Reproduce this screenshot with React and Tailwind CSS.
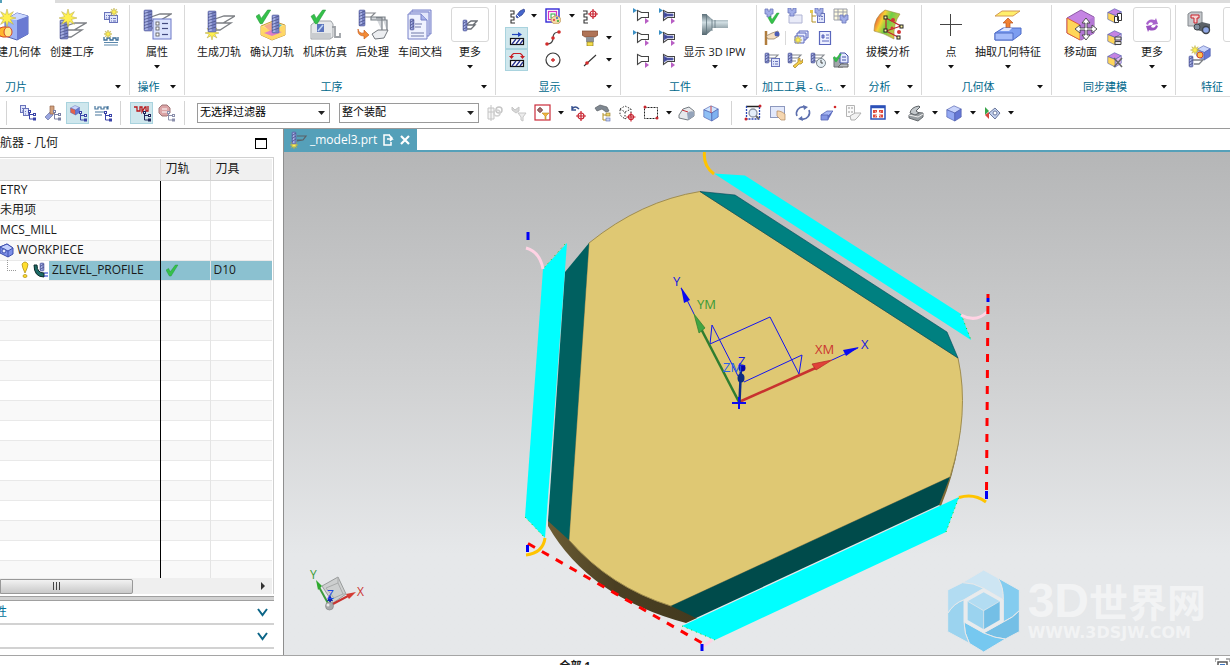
import React, { useState } from 'react';

/* ---------- shared bits ---------- */

const Caret = () => (
    <svg width="6" height="4" viewBox="0 0 6 4" className="shrink-0">
        <path d="M0 0h6L3 3.6z" fill="#111" />
    </svg>
);

const Svg = ({ w = 18, h = 18, children }) => (
    <svg width={w} height={h} viewBox={`0 0 ${w} ${h}`} className="shrink-0" aria-hidden="true">
        {children}
    </svg>
);

// Milling cutter with its flutes
function Bit({ x, y, w, h }) {
    const flutes = [];
    for (let i = 2; i < h - 1; i += 3) flutes.push(i);
    return (
        <g>
            <rect x={x} y={y} width={w} height={h} rx="1" fill="#7a84c6" stroke="#5a639f" strokeWidth=".6" />
            <rect x={x + 1} y={y + 1} width={w / 3} height={h - 2} fill="#a9b2e4" />
            {flutes.map((f) => (
                <path key={f} d={`M${x} ${y + f + 1.5}L${x + w} ${y + f - 1}`} stroke="#4a5288" strokeWidth=".8" />
            ))}
        </g>
    );
}

// Tool path passes behind the cutter
const Passes = ({ x, y }) => (
    <path
        d={`M${x} ${y + 4}L${x + 9} ${y + 1}h11L${x + 8} ${y + 8}h-8M${x + 8} ${y + 8}h8L${x + 5} ${y + 15}h-5`}
        fill="none"
        stroke="#7d8085"
        strokeWidth="1.3"
    />
);

const Star = ({ x, y, r }) => {
    const pts = [];
    for (let i = 0; i < 16; i++) {
        const a = (i * Math.PI) / 8;
        const d = i % 2 ? r * 0.42 : r;
        pts.push(`${x + Math.sin(a) * d},${y - Math.cos(a) * d}`);
    }
    return <polygon points={pts.join(' ')} fill="#fff04f" stroke="#b3a443" strokeWidth=".5" />;
};

const Check = ({ x, y, s = 1 }) => (
    <path
        d="M0 6l3-2 2 4L11 0l3 0L6 13H4z"
        transform={`translate(${x} ${y}) scale(${s})`}
        fill="#35c14a"
        stroke="#1c9433"
        strokeWidth=".5"
    />
);

const Cube = ({ x, y, s, top = '#c9d4fb', left = '#93a8f2', right = '#6577d4' }) => (
    <g transform={`translate(${x} ${y}) scale(${s / 20})`} stroke="#4b5bab" strokeWidth=".8" strokeLinejoin="round">
        <path d="M1 6l9-5 9 4-8 5z" fill={top} />
        <path d="M1 6l10 4v10L1 15z" fill={left} />
        <path d="M11 10l8-5v10l-8 5z" fill={right} />
    </g>
);

const Tree = ({ x, y, color = '#3a43a8' }) => (
    <g fill="none" stroke={color} strokeWidth="1">
        <path d={`M${x + 1.5} ${y + 2}v7h4M${x + 1.5} ${y + 4.5}h4`} />
        <rect x={x + 0.5} y={y + 0.5} width="2" height="2" fill="#fff" />
        <rect x={x + 5.5} y={y + 3.5} width="2" height="2" fill="#fff" />
        <rect x={x + 5.5} y={y + 8} width="2" height="2" fill="#fff" />
    </g>
);

const Sheet = ({ x, y, w, h }) => (
    <g stroke="#6973bb" strokeWidth="1">
        <rect x={x + 0.5} y={y + 0.5} width={w - 1} height={h - 1} fill="#dfe5fb" />
        <path d={`M${x + 2} ${y + 3.5}h1M${x + 4} ${y + 3.5}h${w - 6}M${x + 2} ${y + 6}h1M${x + 4} ${y + 6}h${w - 6}`} />
    </g>
);

/* ---------- large ribbon icons ---------- */

const GeometryIcon = () => (
    <Svg w={30} h={32}>
        <path d="M6 11L18 4l11 3v18l-11 6L6 27z" fill="#9db3f6" stroke="#5566b5" />
        <path d="M18 11l11-4v18l-11 6z" fill="#6a7ad2" />
        <path d="M6 11L18 4l11 3-11 4z" fill="#cbd8ff" />
        <rect x="0" y="18" width="11" height="10" rx="4" fill="#ffb52e" stroke="#d2462b" />
        <ellipse cx="9" cy="23" rx="4" ry="5" fill="#ffe98a" stroke="#d2462b" />
        <Star x={8} y={9} r={9} />
    </Svg>
);

const CreateOpIcon = () => (
    <Svg w={30} h={32}>
        <Passes x={9} y={13} />
        <Bit x={3} y={11} w={8} h={19} />
        <Star x={11} y={9} r={9} />
    </Svg>
);

const PropertyIcon = () => (
    <Svg w={30} h={32}>
        <Passes x={9} y={4} />
        <Bit x={2} y={1} w={8} h={21} />
        <rect x="11" y="10" width="18" height="20" fill="#dbe3fd" stroke="#6a76c6" />
        {[13, 18, 24].map((y) => (
            <g key={y}>
                <rect x="14" y={y} width="3" height="3" fill="#fff" stroke="#555" strokeWidth=".8" />
                <path d={`M20 ${y + 1.5}h6`} stroke="#444c80" strokeWidth="1.2" />
            </g>
        ))}
    </Svg>
);

const GenerateIcon = () => (
    <Svg w={32} h={32}>
        <Passes x={12} y={6} />
        <Star x={9} y={24} r={7} />
        <Bit x={5} y={2} w={8} h={21} />
    </Svg>
);

const VerifyIcon = () => (
    <Svg w={32} h={32}>
        <path d="M5 17l12-5 12 4v10l-13 5-11-5z" fill="#ffe58a" stroke="#c79c40" />
        <path d="M5 17l11 5 13-6v10l-13 5-11-5z" fill="#ffd766" />
        <path d="M8 17l9-4v9l-3 0z" fill="#f7a98a" />
        <path d="M17 13l9 3-6 5h-3z" fill="#54c7d4" />
        <path d="M8 24l8-3 10 2-10 4z" fill="#e07fc6" />
        <Bit x={16} y={6} w={7} h={18} />
        <Check x={0} y={1} s={1.05} />
    </Svg>
);

const MachineIcon = () => (
    <Svg w={32} h={32}>
        <path d="M2 16l5-4h15l2 3v13l-3 2H2z" fill="#e6e8ea" stroke="#a1a5a9" />
        <path d="M2 24h20v5H2z" fill="#c9cccf" />
        <rect x="8" y="15" width="7" height="8" fill="#5b74bd" />
        <path d="M9 22l5-6" stroke="#c0d6f5" strokeWidth="1.5" />
        <path d="M23 18h3v10h5v-4" fill="none" stroke="#9ea2a7" strokeWidth="1.8" />
        <Check x={2} y={1} s={1.05} />
    </Svg>
);

const PostIcon = () => (
    <Svg w={32} h={32}>
        <path d="M8 4h10l-4 4H8" fill="none" stroke="#85888d" strokeWidth="1.2" />
        <Bit x={2} y={1} w={6} h={16} />
        <path d="M19 9h6v13M26 11h4v11M14 8h14v3H14z" fill="#d4d7db" stroke="#7b8188" strokeWidth="1.2" />
        <path d="M15 25l6-4h10l-4 8-9 1z" fill="#eceef1" stroke="#74797f" />
        <path d="M1 20q1 5 6 4v-3l5 5-5 4v-3q-7 0-6-7z" fill="#f28a35" stroke="#c25818" strokeWidth=".6" />
    </Svg>
);

const ShopDocIcon = () => (
    <Svg w={28} h={32}>
        <path d="M6 1h19v24H6z" fill="#d5daf6" stroke="#7680c8" />
        <path d="M4 3h19v24H4z" fill="#e2e7fb" stroke="#7680c8" />
        <path d="M2 5h13l6 6v19H2z" fill="#eff2ff" stroke="#7680c8" />
        <path d="M15 5v6h6" fill="#a7b2ea" stroke="#7680c8" />
        <Bit x={4} y={10} w={4} h={11} />
        <path d="M9 15h7M9 18h6M5 24h13M5 27h13" stroke="#7078a8" strokeWidth="1.2" />
    </Svg>
);

const MoreOpsIcon = () => (
    <Svg w={16} h={16}>
        <path d="M5 7l4-3h6l-4 4H5M11 8h2l-4 4H5" fill="none" stroke="#6b6f75" strokeWidth="1.3" />
        <Bit x={1} y={3} w={4} h={11} />
    </Svg>
);

const SpindleIcon = () => (
    <Svg w={26} h={22}>
        <defs>
            <linearGradient id="steel" x1="0" y1="0" x2="0" y2="1">
                <stop offset="0" stopColor="#5d7079" />
                <stop offset=".4" stopColor="#d0dde2" />
                <stop offset="1" stopColor="#54676f" />
            </linearGradient>
        </defs>
        <path d="M0 0h4l6 5v1h16v8H10v2l-6 5H0z" fill="url(#steel)" />
        <path d="M4.500 0v21M10 5v12M13 6v8" stroke="#5f757e" strokeWidth=".8" />
    </Svg>
);

const DraftIcon = () => (
    <Svg w={32} h={32}>
        <defs>
            <linearGradient id="draft" x1="0" y1="0" x2="1" y2=".5">
                <stop offset="0" stopColor="#ee4037" />
                <stop offset=".2" stopColor="#ee6a37" />
                <stop offset=".38" stopColor="#f7d134" />
                <stop offset=".6" stopColor="#6ccf47" />
                <stop offset="1" stopColor="#e7c341" />
            </linearGradient>
        </defs>
        <path d="M2 22Q2 8 13 1l15 4q-7 9-6 25-10-6-20-8z" fill="url(#draft)" stroke="#9b8b3a" strokeWidth=".6" />
        <path d="M14 9l15 8M14 9v13l12 6M14 22l15-5" fill="none" stroke="#c3202d" strokeWidth="1.2" />
        <circle cx="21" cy="11" r="2" fill="#d43535" />
        <circle cx="27" cy="23" r="2" fill="#d43535" />
        <circle cx="20" cy="19" r="1.500" fill="#d43535" />
        {[[12, 7], [28, 16], [12, 20], [25, 27]].map(([x, y]) => (
            <rect key={`${x}-${y}`} x={x} y={y} width="3" height="3" fill="#fff6a0" stroke="#222" />
        ))}
    </Svg>
);

const PointIcon = () => (
    <Svg w={24} h={32}>
        <path d="M11.500 5v22M1 15.500h22" stroke="#444" strokeWidth="1" />
    </Svg>
);

const ExtractIcon = () => (
    <Svg w={30} h={32}>
        <path d="M2 7l7-5h18l-7 5z" fill="#ffef6b" stroke="#d49a55" />
        <path d="M13 20v-6h-3l5-5 5 5h-3v6z" fill="#f18132" stroke="#b9551b" strokeWidth=".7" />
        <path d="M2 24l8-5h18v6l-8 6H2z" fill="#7d9df0" stroke="#4f6cc8" />
        <path d="M2 24h18v7H2z" fill="#a5bcfa" stroke="#4f6cc8" />
        <path d="M7 22l4-3h8l-3 3z" fill="#dfe7ff" />
    </Svg>
);

const MoveFaceIcon = () => (
    <Svg w={32} h={32}>
        <path d="M2 9l14-8 13 7v16l-13 7-14-7z" fill="#c584e3" stroke="#8d5aa6" />
        <path d="M2 9l13 7v15L2 24z" fill="#ffd65a" stroke="#e0603b" />
        <path d="M15 16l14-8v16l-14 7z" fill="#b478d6" />
        <path
            d="M21 9l4 5h-3v5h5v-3l5 4-5 4v-3h-5v5h3l-4 5-4-5h3v-5h-5v3l-5-4 5-4v3h5v-5h-3z"
            fill="#fff"
            stroke="#444"
            strokeWidth=".9"
        />
    </Svg>
);

const RefreshPurple = () => (
    <Svg w={16} h={16}>
        <path d="M2 7q2-6 9-4l1-2 2 6-6 1 1-2Q5 4 4 8z" fill="#a862cc" />
        <path d="M14 9q-2 6-9 4l-1 2-2-6 6-1-1 2q4 2 5-2z" fill="#9a50c0" />
    </Svg>
);

/* ---------- small ribbon icons ---------- */

const NewProgram = () => (
    <Svg w={16} h={16}>
        <Sheet x={1} y={4} w={8} h={8} />
        <Sheet x={6} y={7} w={9} h={8} />
        <Star x={11} y={4} r={4} />
    </Svg>
);

const NewMethod = () => (
    <Svg w={16} h={16}>
        <path d="M1 7v3h3V8h3v2h3V8h3v2h2V7" fill="none" stroke="#3a6d98" strokeWidth="1.3" />
        <path d="M1 12.500h14M1 15h14" stroke="#5a87ab" strokeWidth="1.2" />
        <Star x={5} y={4} r={4} />
    </Svg>
);

const Squiggle = () => <path d="M1 3h4v3H2v3h3v3H2v3h4" fill="none" stroke="#333" strokeWidth="1.1" />;

const ReplayIcon = () => (
    <Svg w={16} h={16}>
        <Squiggle />
        <path d="M7 8l4-5 4-2 1 2-3 4-5 3z" fill="#4566cc" stroke="#28398a" strokeWidth=".7" />
        <path d="M8 7l3 3" stroke="#fff" />
    </Svg>
);

const ColorPath = () => (
    <Svg w={16} h={16}>
        <rect x="1" y="1" width="13" height="13" fill="none" stroke="#3429d6" strokeWidth="1.4" />
        <rect x="3.500" y="3.500" width="8" height="8" fill="none" stroke="#d735c2" strokeWidth="1.2" />
        <rect x="6" y="6" width="4" height="4" fill="none" stroke="#2da944" />
        <ellipse cx="11" cy="12" rx="5" ry="4" fill="#f3d9a4" stroke="#ad8240" strokeWidth=".6" />
        <circle cx="9" cy="12" r="1" fill="#d33" />
        <circle cx="12" cy="10" r="1" fill="#36c" />
        <circle cx="13" cy="13" r="1" fill="#3a3" />
    </Svg>
);

const Target = ({ x, y, r }) => (
    <g fill="none" stroke="#c8222f" strokeWidth="1.2">
        <circle cx={x} cy={y} r={r} />
        <path d={`M${x - r - 2} ${y}h${2 * r + 4}M${x} ${y - r - 2}v${2 * r + 4}`} />
    </g>
);

const PathTarget = () => (
    <Svg w={16} h={16}>
        <Squiggle />
        <Target x={11} y={6} r={3} />
    </Svg>
);

const Hatch = () => (
    <g>
        <rect x="1.500" y="8.500" width="13" height="6" fill="#fff" stroke="#111" strokeWidth="1.2" />
        <path d="M3 14l4-5M7 14l4-5M11 14l3-4" stroke="#2a3590" strokeWidth="1.3" />
    </g>
);

const StepIcon = () => (
    <Svg w={16} h={16}>
        <Hatch />
        <path d="M3 4.500h7" stroke="#2347c0" strokeWidth="1.2" />
        <path d="M9 2l4 2.500L9 7z" fill="#2347c0" />
    </Svg>
);

const LiftIcon = () => (
    <Svg w={16} h={16}>
        <Hatch />
        <path d="M2.500 6V3.500l2-2h7l2 2V6" fill="none" stroke="#c81f25" strokeWidth="1.2" />
        <path d="M0 4h5L2.500 7zM11 4h5l-2.500 3z" fill="#c81f25" />
    </Svg>
);

const SCurve = () => (
    <Svg w={16} h={16}>
        <path d="M2 14q6 0 6-6t6-6" fill="none" stroke="#444" strokeWidth="1.2" />
        <circle cx="2" cy="14" r="1.800" fill="#d22b2b" />
        <circle cx="8" cy="8" r="1.800" fill="#d22b2b" />
        <circle cx="14" cy="2" r="1.800" fill="#d22b2b" />
    </Svg>
);

const HolderIcon = () => (
    <Svg w={16} h={16}>
        <path d="M0 1h16v4l-3 2H3L0 5z" fill="#b07457" stroke="#7d4c35" strokeWidth=".7" />
        <path d="M4 7h8v5H4z" fill="#8e939a" />
        <path d="M5 12h6v4H5z" fill="#f4dd4a" stroke="#8a7a24" strokeWidth=".7" />
    </Svg>
);

const CircleIcon = () => (
    <Svg w={16} h={16}>
        <circle cx="8" cy="8" r="7" fill="none" stroke="#3a3a3a" strokeWidth="1.2" />
        <path d="M8 6v4M6 8h4" stroke="#d22b2b" strokeWidth="1.3" />
    </Svg>
);

const LineIcon = () => (
    <Svg w={16} h={16}>
        <path d="M2 14L14 3" stroke="#333" strokeWidth="1.1" />
        <circle cx="5" cy="11" r="1.800" fill="#d22b2b" />
    </Svg>
);

const ToolIcon = ({ filled, start = true }) => (
    <Svg w={16} h={16}>
        <path d="M4.500 2.500l4 2h7v5h-7l-4 3z" fill="#fff" stroke="#444" strokeWidth="1.1" />
        {filled && <path d="M5 4l3 2h6v2H8l-3 2z" fill="#3e4696" stroke="#6068b4" strokeWidth=".8" />}
        {start && <path d="M0 0l4 2.500L0 5z" fill="#3a8fc4" />}
        <path d="M12 10l4 3-4 3z" fill="#b85fc4" />
    </Svg>
);

const MiniHolder = ({ x, y }) => (
    <path d={`M${x} ${y}h3v2h2v-2h3v5h-2v3h-4v-3h-2z`} fill="#a2aee8" stroke="#6b76bb" strokeWidth=".8" />
);

const ToolCheck = () => (
    <Svg w={16} h={16}>
        <MiniHolder x={1} y={1} />
        <Check x={4} y={5} s={0.8} />
    </Svg>
);

const ToolBlock = () => (
    <Svg w={16} h={16}>
        <path d="M2 7h13v8H2z" fill="#e9ebf8" stroke="#b0b4d4" />
        <MiniHolder x={1} y={0} />
    </Svg>
);

const ToolTree = () => (
    <Svg w={16} h={16}>
        <Sheet x={7} y={5} w={8} h={10} />
        <path d="M2 3v11h4M2 8h4" fill="none" stroke="#b39125" />
        <rect x="0" y="2" width="3" height="3" fill="#e6c94b" />
        <MiniHolder x={5} y={0} />
    </Svg>
);

const ToolTable = () => (
    <Svg w={16} h={16}>
        <path d="M1 1h13v11H1z" fill="#fffbe0" stroke="#9a9ea8" />
        <path d="M1 4h13M1 8h13M5 1v11M10 1v11" stroke="#9a9ea8" />
        <MiniHolder x={7} y={7} />
    </Svg>
);

const HammerTool = () => (
    <Svg w={16} h={16}>
        <path d="M2 1v14" stroke="#b07c3c" strokeWidth="2.500" />
        <path d="M2 6l6-3 6-2 1 5-5 3-6 0z" fill="#f5dfc2" stroke="#8a7358" strokeWidth=".7" />
        <circle cx="13" cy="4" r="2.500" fill="#4b5cb5" />
    </Svg>
);

const WindowsIcon = () => (
    <Svg w={16} h={16}>
        <g fill="#e7ecff" stroke="#5a67bd">
            <path d="M6 1h9v7H6z" />
            <path d="M4 3h9v7H4z" />
            <path d="M2 6h9v7H2z" />
        </g>
        <Star x={5} y={10} r={4} />
    </Svg>
);

const DocIcon = () => (
    <Svg w={16} h={16}>
        <path d="M2.500 1.500h11v13h-11z" fill="#eef1ff" stroke="#5a67bd" strokeWidth="1.2" />
        <path d="M5 5h2v3H5zM9 5h3M9 8h3M5 11h7" fill="#8c96d6" stroke="#5a67bd" />
    </Svg>
);

const MiniOp = () => (
    <g>
        <path d="M5 3h9l-3 3H5M5 9h4" fill="none" stroke="#888c92" strokeWidth="1.1" />
        <Bit x={1} y={1} w={4} h={10} />
    </g>
);

const OpProps = () => (
    <Svg w={16} h={16}>
        <MiniOp />
        <Sheet x={7} y={6} w={9} h={9} />
    </Svg>
);

const OpWrench = () => (
    <Svg w={16} h={16}>
        <MiniOp />
        <path d="M6 14l5-4 0-3 2-1v3l2 0 1-2v3l-2 2-2 0-4 4z" fill="#f3cd48" stroke="#a07c22" strokeWidth=".7" />
    </Svg>
);

const OpClock = () => (
    <Svg w={16} h={16}>
        <MiniOp />
        <circle cx="11" cy="11" r="4.500" fill="#e3edf3" stroke="#7a848c" />
        <path d="M11 8v3h2" fill="none" stroke="#444" />
    </Svg>
);

const OpMachine = () => (
    <Svg w={16} h={16}>
        <path d="M1 6h9v9H1z" fill="#a1a6aa" stroke="#6a7075" />
        <path d="M7 1h5l3 3v7H7z" fill="#e5eaff" stroke="#4350a4" />
        <path d="M9 5h4M9 8h4" stroke="#4350a4" />
        <path d="M5 15h10v-3H8z" fill="#b9bec3" stroke="#666" />
        <Check x={0} y={2} s={0.6} />
    </Svg>
);

const SyncCube = ({ mark }) => (
    <Svg w={16} h={16}>
        <Cube x={0} y={0} s={15} top="#c584e3" left="#ffd65a" right="#e2b8f2" />
        {mark === 'copy' && (
            <path d="M7.500 8.500h4v6h-4zM10.500 5.500h4v7h-4z" fill="#fff" stroke="#333" />
        )}
        {mark === 'grid' && (
            <path d="M8 7h6v3H8zM8 11.500h6v3H8z" fill="#e7e7e7" stroke="#444" />
        )}
        {mark === 'delete' && <path d="M7 6l8 9M15 6l-8 9" stroke="#666" strokeWidth="1.6" />}
    </Svg>
);

const FindFeature = () => (
    <Svg w={24} h={24}>
        <path d="M1 3l3-2h11v11l-3 3H1z" fill="#c5c8cc" stroke="#83888d" />
        <path d="M4 4h8v3h-2v5H7V7H4z" fill="#f6d4d4" stroke="#c8232c" />
        <path d="M7 14l8-3 8 2v6l-5 4-4-3-5-1z" fill="#5c6268" />
        <circle cx="19" cy="19" r="3.500" fill="#8fa7e6" stroke="#3f444a" strokeWidth="1.4" />
        <circle cx="10" cy="16" r="3" fill="#8291a0" stroke="#3f444a" />
    </Svg>
);

const FeatureOp = () => (
    <Svg w={24} h={24}>
        <Cube x={9} y={0} s={15} />
        <circle cx="13" cy="10" r="3" fill="#ffc24b" stroke="#d2462b" />
        <path d="M6 15h10l-4 4H7" fill="none" stroke="#7c8086" strokeWidth="1.3" />
        <Bit x={2} y={11} w={4} h={11} />
        <Star x={8} y={5} r={4.500} />
    </Svg>
);

/* ---------- toolbar icons ---------- */

const ProgramView = () => (
    <Svg>
        <Sheet x={1} y={1} w={6} h={8} />
        <Sheet x={4} y={4} w={6} h={8} />
        <Tree x={9} y={6} />
    </Svg>
);

const ToolView = () => (
    <Svg>
        <path d="M1 13l5-5 3 3-5 5z" fill="#9aa6e0" stroke="#6a74a4" strokeWidth=".7" />
        <path d="M6 2h4v8H6z" fill="#d2a07c" stroke="#93664a" strokeWidth=".7" />
        <Tree x={9} y={6} color="#7b80a4" />
    </Svg>
);

const GeometryView = () => (
    <Svg>
        <Cube x={1} y={1} s={10} left="#e2614c" />
        <Tree x={10} y={7} />
    </Svg>
);

const MethodView = () => (
    <Svg>
        <path d="M1 2v3h3V3h3v2h3V3h3v2h1V2M1 8h11M1 11h7" fill="none" stroke="#44749c" strokeWidth="1.2" />
        <Tree x={10} y={7} />
    </Svg>
);

const PathFilter = () => (
    <Svg>
        <path d="M1 3h3v4h3V3h2v5l3-5h1v4l2 0V2" fill="none" stroke="#b9191c" strokeWidth="1.3" />
        <Tree x={10} y={7} color="#20265a" />
    </Svg>
);

const StopTree = () => (
    <Svg>
        <path d="M4 1h5l3 3v5l-3 3H4L1 9V4z" fill="#dba4a6" stroke="#a07577" />
        <path d="M4 5h5M4 8h5" stroke="#fff" />
        <Tree x={9} y={7} color="#8c90ac" />
    </Svg>
);

const GreyParts = () => (
    <Svg>
        <path d="M2 4h6v11H2zM2 8h6M5 1v16" fill="#f5f5f5" stroke="#c4c4c4" />
        <circle cx="13" cy="6" r="3" fill="none" stroke="#c6c6c6" strokeWidth="1.5" />
        <circle cx="11" cy="9" r="3" fill="none" stroke="#d2d2d2" strokeWidth="1.5" />
    </Svg>
);

const GreyFilter = () => (
    <Svg>
        <path d="M2 3l3 3 4-3v4L6 9 2 6z" fill="#d8d8d8" stroke="#c6c6c6" />
        <path d="M8 9h8l-3 4v4l-2-1v-3z" fill="#ececec" stroke="#c6c6c6" />
    </Svg>
);

const SnapFilter = () => (
    <Svg>
        <rect x="1" y="1" width="15" height="15" fill="#fff" stroke="#cb2c3a" strokeWidth="1.2" />
        <g fill="none" stroke="#7a4040">
            <circle cx="6" cy="6" r="2" />
            <path d="M3 6h6M6 3v6" />
        </g>
        <path d="M8 9h7l-3 3v4l-1-1v-3z" fill="#f3b73c" stroke="#b98a2a" strokeWidth=".6" />
    </Svg>
);

const MoveTarget = () => (
    <Svg>
        <path d="M2 2v4h4M2 5q3-4 7 0" fill="none" stroke="#37518f" strokeWidth="1.4" />
        <Target x={11} y={12} r={3} />
    </Svg>
);

const BinocularTree = () => (
    <Svg>
        <path d="M1 4l5-3 7 2 2 4-3 1-4-3-5 2z" fill="#7f8891" stroke="#5b6167" strokeWidth=".7" />
        <path d="M9 9v7h4M9 11h4" fill="none" stroke="#b39125" />
        <rect x="12" y="9" width="4" height="3" fill="#f0d668" stroke="#8a742a" strokeWidth=".6" />
        <rect x="12" y="14" width="4" height="3" fill="#c7d3f5" stroke="#5b6cac" strokeWidth=".6" />
    </Svg>
);

const DottedTarget = () => (
    <Svg>
        <path d="M2 5l5-3 6 3v6l-6 4-5-4zM2 5l5 3 6-3M7 8v7" fill="none" stroke="#333" strokeDasharray="1.500 1.500" />
        <Target x={13} y={13} r={2.500} />
    </Svg>
);

const Marquee = () => (
    <Svg>
        <rect x="2.500" y="3.500" width="13" height="11" fill="none" stroke="#222" strokeDasharray="2 1" />
        <circle cx="3" cy="3" r="1.500" fill="#c9252d" />
        <circle cx="15" cy="14" r="1.500" fill="#c9252d" />
    </Svg>
);

const ShadedPart = () => (
    <Svg>
        <path d="M1 11l4-6 6-2 5 4v5l-6 4-9-2z" fill="#e6e9ec" stroke="#767c82" />
        <path d="M9 9q4-3 7-1v4l-6 4z" fill="#95a4ba" />
        <path d="M4 6l6 2" stroke="#c8333a" />
    </Svg>
);

const GlassCube = () => (
    <Svg>
        <Cube x={1} y={1} s={16} top="#cfe6ff" left="#8fc0f5" right="#7fb2f0" />
        <path d="M9 2v7" stroke="#d34343" />
    </Svg>
);

const FitView = () => (
    <Svg>
        <path d="M2 2.500h14" fill="none" stroke="#222" strokeWidth="1.500" />
        <path d="M2.500 2v13h13V2" fill="none" stroke="#2846b4" strokeDasharray="2 1" strokeWidth="1.300" />
        <circle cx="9" cy="9" r="4" fill="#e4eefa" stroke="#8c94a4" strokeWidth="1.3" />
        <path d="M12 12l3 3" stroke="#666" strokeWidth="2" />
        <circle cx="16" cy="2" r="1.500" fill="#c9252d" />
        <circle cx="2" cy="15" r="1.500" fill="#c9252d" />
    </Svg>
);

const PanView = () => (
    <Svg>
        <rect x="1.500" y="2.500" width="14" height="11" fill="#e3e9fb" stroke="#8d98be" />
        <path d="M8 7l2 0 3 1 3 2v6h-4l-4-4z" fill="#f5d6b0" stroke="#b0885f" strokeWidth=".7" />
    </Svg>
);

const RotateView = () => (
    <Svg>
        <path d="M3 12a6.500 6.500 0 0 1 7-9M15 6a6.500 6.500 0 0 1-7 9" fill="none" stroke="#5c6fae" strokeWidth="1.600" />
        <path d="M9 1l5 2-4 3zM9 17l-5-2 4-3z" fill="#5c6fae" />
    </Svg>
);

const PencilBox = () => (
    <Svg>
        <path d="M2 11l6-4h6l-5 5z" fill="#a6b6f4" stroke="#5566b5" strokeWidth=".8" />
        <path d="M2 11h7v5H2z" fill="#8496e4" stroke="#5566b5" strokeWidth=".8" />
        <path d="M9 12l5-5-2 4-3 5z" fill="#5c6cc0" />
        <circle cx="16" cy="3" r="1.300" fill="#d22b2b" />
    </Svg>
);

const GreySheets = () => (
    <Svg>
        <path d="M2.500 1.500h8v11h-8z" fill="#fafafa" stroke="#b4b4b4" />
        <path d="M4 4h2M7 4h2M4 8h2M7 8h2" stroke="#999" />
        <path d="M6 12l5-3h6l-3 4-3 3H7z" fill="#f2f2f2" stroke="#b0b0b0" />
    </Svg>
);

const LayoutIcon = () => (
    <Svg w={16} h={16}>
        <rect x="1" y="1" width="14" height="13" fill="#fff" stroke="#2b50b8" strokeWidth="1.500" />
        <path d="M1 2h14" stroke="#2b50b8" strokeWidth="2.500" />
        <path d="M3 5h4v3H3zM9 5h4v3H9zM3 9.500h4v3H3zM9 9.500h4v3H9z" fill="#e04a3c" />
        <path d="M5 6.500l6 5M11 6.500l-6 5" stroke="#fff" strokeWidth=".8" />
    </Svg>
);

const ClipIcon = () => (
    <Svg>
        <path d="M2 11l5-3 9 1v4l-5 4-9-3z" fill="#969ca0" stroke="#666b6f" />
        <path d="M3 9q1-6 9-7l1 1-4 4 3 2-4 2z" fill="#c3c8cc" stroke="#5e6367" />
        <path d="M2 11l9 2 5-3" fill="none" stroke="#eee" />
    </Svg>
);

const FlipIcon = () => (
    <Svg>
        <path d="M2 3l4 4-4 4z" fill="#39a54a" />
        <path d="M2 11l4-3v7z" fill="#d8473f" />
        <path d="M6 9l6-5 5 5-5 6z" fill="#c2d0ee" stroke="#6b789c" />
        <circle cx="12" cy="9" r="2" fill="#fff" stroke="#6b789c" />
    </Svg>
);

/* ---------- ribbon building blocks ---------- */

const BigButton = ({ icon, label, caret, boxed }) => (
    <button className="flex shrink-0 flex-col items-center pt-[2px] whitespace-nowrap">
        <span
            className={
                boxed
                    ? 'flex h-[35px] w-[38px] items-center justify-center rounded-[3px] border border-[#d8d8d8]'
                    : 'flex h-[35px] items-center'
            }
        >
            {icon}
        </span>
        <span className="flex h-5 items-center">{label}</span>
        <span className="flex h-[10px] items-center">{caret && <Caret />}</span>
    </button>
);

const SmallButton = ({ icon, label, active }) => (
    <button
        aria-label={label}
        className={
            active
                ? 'flex h-[22px] w-full items-center justify-center border border-[#a9d3de] bg-[#cfe7ed]'
                : 'flex h-[22px] w-full items-center justify-center'
        }
    >
        {icon}
    </button>
);

const CaretButton = ({ label }) => (
    <button aria-label={label} className="flex h-[22px] w-full items-center justify-center">
        <Caret />
    </button>
);

const Group = ({ label, width, labelClass = 'justify-center', children }) => (
    <section className={`flex shrink-0 flex-col border-r border-[#d9d9d9] ${width}`}>
        <div className="flex h-[74px]">{children}</div>
        <div className="flex h-4 items-center text-[#00688c]">
            <span className={`flex flex-1 whitespace-nowrap ${labelClass}`}>{label}</span>
            <button aria-label={`${label}选项`} className="flex w-[17px] justify-end pr-2">
                <Caret />
            </button>
        </div>
    </section>
);

function Ribbon() {
    return (
        <div className="flex shrink-0 overflow-hidden border-b border-[#dcdcdc] pt-[2px] pb-px">
            <Group label="刀片" width="w-[130px]" labelClass="justify-start pl-[5px]">
                <div className="flex flex-1 justify-end gap-[9px] overflow-hidden pr-[10px]">
                    <BigButton icon={<GeometryIcon />} label="创建几何体" />
                    <BigButton icon={<CreateOpIcon />} label="创建工序" />
                    <div className="flex w-4 flex-col">
                        <SmallButton icon={<NewProgram />} label="创建程序" />
                        <SmallButton icon={<NewMethod />} label="创建方法" />
                    </div>
                </div>
            </Group>

            <Group label="操作" width="w-[55px]">
                <div className="flex flex-1 justify-center">
                    <BigButton icon={<PropertyIcon />} label="属性" caret />
                </div>
            </Group>

            <Group label="工序" width="w-[311px]">
                <div className="flex gap-[9px] pl-3">
                    <BigButton icon={<GenerateIcon />} label="生成刀轨" />
                    <BigButton icon={<VerifyIcon />} label="确认刀轨" />
                    <BigButton icon={<MachineIcon />} label="机床仿真" />
                    <BigButton icon={<PostIcon />} label="后处理" />
                    <BigButton icon={<ShopDocIcon />} label="车间文档" />
                    <BigButton icon={<MoreOpsIcon />} label="更多" caret boxed />
                </div>
            </Group>

            <Group label="显示" width="w-[125px]">
                <div className="grid grid-cols-[23px_12px_26px_11px_26px_11px] content-start pl-[9px]">
                    <SmallButton icon={<ReplayIcon />} label="重播刀轨" />
                    <CaretButton label="重播选项" />
                    <SmallButton icon={<ColorPath />} label="刀轨颜色" />
                    <CaretButton label="颜色选项" />
                    <SmallButton icon={<PathTarget />} label="刀轨点" />
                    <span />
                    <SmallButton icon={<StepIcon />} label="切削移动" active />
                    <span />
                    <SmallButton icon={<SCurve />} label="曲线" />
                    <span />
                    <SmallButton icon={<HolderIcon />} label="夹持器" />
                    <CaretButton label="夹持器选项" />
                    <SmallButton icon={<LiftIcon />} label="非切削移动" active />
                    <span />
                    <SmallButton icon={<CircleIcon />} label="圆" />
                    <span />
                    <SmallButton icon={<LineIcon />} label="直线" />
                    <CaretButton label="直线选项" />
                </div>
            </Group>

            <Group label="工件" width="w-[136px]">
                <div className="grid grid-cols-[26px_26px] content-start pl-[7px]">
                    <SmallButton icon={<ToolIcon />} label="起始毛坯" />
                    <SmallButton icon={<ToolIcon filled />} label="起始实体" />
                    <SmallButton icon={<ToolIcon />} label="过程毛坯" />
                    <SmallButton icon={<ToolIcon filled />} label="过程实体" />
                    <SmallButton icon={<ToolIcon start={false} />} label="结束毛坯" />
                    <SmallButton icon={<ToolIcon filled start={false} />} label="结束实体" />
                </div>
                <div className="flex flex-1 justify-center pr-[7px]">
                    <BigButton icon={<SpindleIcon />} label="显示 3D IPW" caret />
                </div>
            </Group>

            <Group label="加工工具 - G..." width="w-[98px]">
                <div className="flex flex-col pl-[3px]">
                    <div className="grid grid-cols-[23px_23px_23px_23px]">
                        <SmallButton icon={<ToolCheck />} label="检查刀具" />
                        <SmallButton icon={<ToolBlock />} label="刀具毛坯" />
                        <SmallButton icon={<ToolTree />} label="刀具列表" />
                        <SmallButton icon={<ToolTable />} label="刀具表" />
                    </div>
                    <div className="grid grid-cols-[23px_1px_26px_18px] gap-x-[2px]">
                        <SmallButton icon={<HammerTool />} label="编辑刀具" />
                        <span className="my-1 bg-[#d9d9d9]" />
                        <SmallButton icon={<WindowsIcon />} label="新建窗口" />
                        <SmallButton icon={<DocIcon />} label="文档" />
                    </div>
                    <div className="grid grid-cols-[23px_23px_23px_23px]">
                        <SmallButton icon={<OpProps />} label="工序属性" />
                        <SmallButton icon={<OpWrench />} label="工序编辑" />
                        <SmallButton icon={<OpClock />} label="工序时间" />
                        <SmallButton icon={<OpMachine />} label="机床检查" />
                    </div>
                </div>
            </Group>

            <Group label="分析" width="w-[67px]">
                <div className="flex flex-1 justify-center">
                    <BigButton icon={<DraftIcon />} label="拔模分析" caret />
                </div>
            </Group>

            <Group label="几何体" width="w-[130px]">
                <div className="flex flex-1 justify-end gap-3 pr-[10px]">
                    <BigButton icon={<PointIcon />} label="点" caret />
                    <BigButton icon={<ExtractIcon />} label="抽取几何特征" caret />
                </div>
            </Group>

            <Group label="同步建模" width="w-[124px]">
                <div className="flex flex-1 justify-end gap-2 pr-1">
                    <BigButton icon={<MoveFaceIcon />} label="移动面" />
                    <div className="flex w-5 flex-col">
                        <SmallButton icon={<SyncCube mark="copy" />} label="复制面" />
                        <SmallButton icon={<SyncCube mark="grid" />} label="阵列面" />
                        <SmallButton icon={<SyncCube mark="delete" />} label="删除面" />
                    </div>
                    <BigButton icon={<RefreshPurple />} label="更多" caret boxed />
                </div>
            </Group>

            <Group label="特征" width="w-[90px]">
                <div className="flex gap-3 pl-[11px]">
                    <div className="flex flex-col gap-[10px] pt-[6px]">
                        <button aria-label="查找特征"><FindFeature /></button>
                        <button aria-label="特征工序"><FeatureOp /></button>
                    </div>
                    <BigButton icon={<MoreOpsIcon />} label="" boxed />
                </div>
            </Group>
        </div>
    );
}

/* ---------- selection toolbar ---------- */

const ToolButton = ({ icon, label, active }) => (
    <button
        aria-label={label}
        className={
            active
                ? 'flex h-[22px] w-[23px] shrink-0 items-center justify-center border border-[#a9d3de] bg-[#cfe7ed]'
                : 'flex h-[22px] w-[23px] shrink-0 items-center justify-center'
        }
    >
        {icon}
    </button>
);

const DropMark = ({ label }) => (
    <button aria-label={label} className="flex h-[22px] w-[11px] shrink-0 items-center justify-center">
        <Caret />
    </button>
);

const Divider = () => <span className="h-6 w-px shrink-0 bg-[#d4d4d4]" />;

const Picker = ({ label, options, width }) => (
    <label className={`relative flex h-5 shrink-0 items-center ${width}`}>
        <span className="sr-only">{label}</span>
        <select className="h-full w-full appearance-none border border-[#9a9a9a] bg-white pl-[2px] text-[11px] text-black">
            {options.map((o) => (
                <option key={o}>{o}</option>
            ))}
        </select>
        <span className="pointer-events-none absolute right-[5px]">
            <svg width="7" height="4" viewBox="0 0 7 4"><path d="M0 0h7L3.500 4z" fill="#222" /></svg>
        </span>
    </label>
);

function SelectionBar() {
    return (
        <div className="flex h-8 shrink-0 items-center overflow-hidden border-b border-[#9a9a9a] pl-[6px]">
            <Divider />
            <div className="flex gap-[2px] pr-[6px] pl-[9px]">
                <ToolButton icon={<ProgramView />} label="程序顺序视图" />
                <ToolButton icon={<ToolView />} label="机床视图" />
                <ToolButton icon={<GeometryView />} label="几何视图" active />
                <ToolButton icon={<MethodView />} label="加工方法视图" />
            </div>
            <Divider />
            <div className="flex gap-[2px] pr-[6px] pl-[9px]">
                <ToolButton icon={<PathFilter />} label="刀轨筛选" active />
                <ToolButton icon={<StopTree />} label="停止" />
            </div>
            <Divider />
            <div className="flex gap-[9px] pr-1 pl-3">
                <Picker label="类型过滤器" options={['无选择过滤器']} width="w-[133px]" />
                <Picker label="选择范围" options={['整个装配']} width="w-[140px]" />
            </div>
            <div className="flex gap-[1px]">
                <ToolButton icon={<GreyParts />} label="部件" />
                <ToolButton icon={<GreyFilter />} label="过滤器" />
                <ToolButton icon={<SnapFilter />} label="捕捉" />
                <DropMark label="捕捉选项" />
                <ToolButton icon={<MoveTarget />} label="移动" />
                <ToolButton icon={<BinocularTree />} label="查找" />
                <ToolButton icon={<DottedTarget />} label="捕捉体" />
                <ToolButton icon={<Marquee />} label="矩形" />
                <DropMark label="矩形选项" />
                <ToolButton icon={<ShadedPart />} label="着色" />
                <ToolButton icon={<GlassCube />} label="透明" />
            </div>
            <div className="flex pr-[9px] pl-[9px]">
                <Divider />
            </div>
            <div className="flex gap-[2px]">
                <ToolButton icon={<FitView />} label="适合窗口" />
                <ToolButton icon={<PanView />} label="平移" />
                <ToolButton icon={<RotateView />} label="旋转" />
                <ToolButton icon={<PencilBox />} label="透视" />
                <ToolButton icon={<GreySheets />} label="草图" />
                <ToolButton icon={<LayoutIcon />} label="布局" />
                <DropMark label="布局选项" />
                <ToolButton icon={<ClipIcon />} label="剖切" />
                <DropMark label="剖切选项" />
                <ToolButton icon={<Svg><Cube x={1} y={1} s={16} /></Svg>} label="渲染样式" />
                <DropMark label="渲染选项" />
                <ToolButton icon={<FlipIcon />} label="显示和隐藏" />
                <DropMark label="显示选项" />
            </div>
            <div className="pl-1">
                <Divider />
            </div>
        </div>
    );
}

/* ---------- operation navigator ---------- */

const rows = [
    { name: 'ETRY' },
    { name: '未用项' },
    { name: 'MCS_MILL' },
    { name: 'WORKPIECE', icon: true },
    { name: 'ZLEVEL_PROFILE', tool: 'D10', selected: true },
];

const WorkpieceIcon = () => (
    <Svg w={14} h={16}>
        <path d="M0 5l7-3 6 4v6l-5 3-8-4z" fill="#7d90e8" stroke="#3d4fae" />
        <path d="M0 5l7-3 6 4-5 3z" fill="#c3d0fd" stroke="#3d4fae" />
        <circle cx="4" cy="9" r="2" fill="#e6ebff" stroke="#3d4fae" />
        <path d="M8 9v6" stroke="#3d4fae" />
    </Svg>
);

const StateIcons = () => (
    <span className="flex shrink-0 items-center gap-1 pl-[7px]">
        <Svg w={22} h={20}>
            <path d="M.5 0v10M0 10.500h9" fill="none" stroke="#999" strokeDasharray="1 1" />
            <path d="M18 13q-3-6-3-9 3-4 6 0 0 3-3 9z" fill="#ffde2e" stroke="#a8860f" strokeWidth=".7" />
            <ellipse cx="18" cy="16" rx="2" ry="1.500" fill="#ffde2e" stroke="#a8860f" strokeWidth=".7" />
        </Svg>
        <Svg w={16} h={16}>
            <path d="M1 3h3q0 8 7 8v4Q1 15 1 3z" fill="#1d6b66" stroke="#0d2b2a" />
            <Bit x={7} y={1} w={4} h={8} />
            <path d="M11 11h4M11 14h4" stroke="#1b31cc" strokeWidth="1.2" />
        </Svg>
    </span>
);

function Navigator() {
    const [selected, setSelected] = useState('ZLEVEL_PROFILE');
    const lines = Array.from({ length: 20 }, (_, i) => rows[i] || {});

    return (
        <aside className="flex w-[274px] shrink-0 flex-col text-[12px]">
            <header className="flex h-7 shrink-0 items-center justify-between pr-[7px]">
                <h2>航器 - 几何</h2>
                <button aria-label="最大化" className="h-[11px] w-3 border border-t-2 border-black" />
            </header>

            <div className="flex min-h-0 flex-1 flex-col border-t border-r border-[#d0d0d0] pt-px pr-px">
                <div className="min-h-0 flex-1 overflow-hidden">
                    <table className="w-full table-fixed border-collapse">
                        <colgroup>
                            <col className="w-[160px]" />
                            <col className="w-[50px]" />
                            <col />
                        </colgroup>
                        <thead>
                            <tr className="h-[21px] border-b border-[#d2d2d2] bg-[#f0f0f0] text-left">
                                <th aria-label="名称" className="border-r border-[#d2d2d2]" />
                                <th className="border-r border-[#d2d2d2] pl-[5px] leading-4 font-normal">刀轨</th>
                                <th className="pl-[5px] leading-4 font-normal">刀具</th>
                            </tr>
                        </thead>
                        <tbody>
                            {lines.map((row, i) => {
                                const on = row.name && row.name === selected;
                                return (
                                    <tr
                                        key={i}
                                        onClick={() => row.name && setSelected(row.name)}
                                        className={`h-5 border-b border-[#e9e9e9] ${i % 2 ? 'bg-[#f9f9f9]' : 'bg-white'}`}
                                    >
                                        <td className="border-r border-black p-0">
                                            <span className="flex h-[19px] items-center">
                                                {row.icon && <WorkpieceIcon />}
                                                {row.tool && <StateIcons />}
                                                <span
                                                    className={`flex h-full flex-1 items-center leading-4 ${row.icon || row.tool ? 'pl-[3px]' : ''} ${on ? 'bg-[#8bc1d0]' : ''}`}
                                                >
                                                    {row.name}
                                                </span>
                                            </span>
                                        </td>
                                        <td className={`border-r border-[#e4e4e4] p-0 pl-[5px] ${on ? 'bg-[#8bc1d0]' : ''}`}>
                                            {row.tool && <Svg w={14} h={14}><Check x={0} y={2} s={0.85} /></Svg>}
                                        </td>
                                        <td className={`p-0 pl-[3px] leading-4 ${on ? 'bg-[#8bc1d0]' : ''}`}>{row.tool}</td>
                                    </tr>
                                );
                            })}
                        </tbody>
                    </table>
                </div>
                <div className="flex h-4 shrink-0 items-center justify-between bg-[#efefef] pr-[6px]">
                    <div className="flex h-[15px] w-[133px] items-center justify-center gap-[2px] rounded-r-[2px] border border-[#999] bg-linear-to-b from-[#f2f2f2] to-[#c9c9c9] pr-5">
                        <i className="h-2 w-px bg-[#444]" />
                        <i className="h-2 w-px bg-[#444]" />
                        <i className="h-2 w-px bg-[#444]" />
                    </div>
                    <svg width="5" height="8" viewBox="0 0 5 8"><path d="M0 0l4 4-4 4z" fill="#333" /></svg>
                </div>
            </div>

            <div className="mt-[2px] h-[5px] shrink-0 border-y border-[#a0a0a0] bg-[#d2d2d2]" />
            {['性', ''].map((title, i) => (
                <button
                    key={i}
                    aria-label={title || '详细信息'}
                    className="flex h-6 shrink-0 items-center justify-between border-b-2 border-[#d2d2d2] pr-[6px] text-[#00739b]"
                >
                    <span className="flex w-[7px] justify-end overflow-hidden">{title}</span>
                    <svg width="11" height="9" viewBox="0 0 11 9">
                        <path d="M1 1l4.500 6L10 1" fill="none" stroke="#0b6587" strokeWidth="2" />
                    </svg>
                </button>
            ))}
            <div className="h-[6px] shrink-0" />
        </aside>
    );
}

/* ---------- graphics window ---------- */

const Scene = () => (
    <svg
        className="absolute inset-0 h-full w-full"
        viewBox="284 152 946 503"
        fontFamily='"Open Sans", "Noto Sans", sans-serif'
        fontSize="13"
    >
        <defs>
            <linearGradient id="rim" x1="0" y1="0" x2="1" y2="0">
                <stop offset="0" stopColor="#6b5c34" />
                <stop offset=".45" stopColor="#4a3f22" />
                <stop offset="1" stopColor="#433a1f" />
            </linearGradient>
        </defs>

        {/* side wall of the plate */}
        <path d="M548 519L569 538 672 602 697 618 686 623Q589 597 548 526z" fill="url(#rim)" />
        <path d="M961 380Q966 445 941 506L936 504 950 477z" fill="#7d6a36" />

        {/* top face */}
        <path
            d="M700 191.500Q641 201 589 243L569 540Q610 587 671 606L950 477Q970 413 958 358z"
            fill="#dfc873"
            stroke="#a08d4f"
            strokeWidth="1"
        />

        {/* finished walls */}
        <path d="M700 191.500L735 195 947 332 958 358z" fill="#008080" stroke="#045" strokeWidth=".6" />
        <path d="M589 243L565 272 548 521 569 540z" fill="#006060" />
        <path d="M671 606L950 477 939 505 696 618z" fill="#004b4b" />

        {/* cutting passes */}
        <g fill="#00ffff">
            <path d="M714 173.500L745 175.500 961 314 971 340z" />
            <path d="M567 243L543 269 525 517 545 538z" />
            <path d="M959 497L946 532 715 640 682 626z" />
        </g>
        <path
            d="M565 244L543 269M525 517L545 538M682 626L715 640M946 532L959 497M961 314L971 340"
            fill="none"
            stroke="#12d81c"
            strokeDasharray="1 4"
        />

        {/* engage and retract moves */}
        <g fill="none" strokeWidth="3">
            <path d="M704.500 152Q703 166 714 174" stroke="#ffc400" />
            <path d="M545 538Q543 553 526 555" stroke="#ffc400" />
            <path d="M959 497.500Q974 493 986 502" stroke="#ffc400" />
            <path d="M526 248Q540 252 543 269" stroke="#ffd3e4" />
            <path d="M961 315Q976 323 987 312" stroke="#ffd3e4" />
            <path d="M712 640L702 647" stroke="#ffd3e4" />
        </g>

        {/* rapids */}
        <g stroke="#f00" strokeWidth="3" strokeDasharray="8 8">
            <path d="M988 294L986.500 491" strokeDashoffset="4" />
            <path d="M528 543.500L702 643" />
        </g>
        <g stroke="#0000f5" strokeWidth="3">
            <path d="M528 232v8M527.500 545v7M702 644v7M988 298v4M986.500 491v8" />
        </g>

        {/* datum plane frame */}
        <g fill="none" stroke="#1414f0" strokeWidth="1">
            <path d="M744 382L802 355 799 374 770 317 710 344 712 325 738 376" />
            <path d="M681 288L694 314M832 360L858 348" />
        </g>
        <path d="M681 287L690 300 684 303z" fill="#0a0af0" />
        <path d="M859 347L846 356 843 350z" fill="#0a0af0" />

        {/* machine axes */}
        <path d="M739 402L697 321" stroke="#2f7d2f" strokeWidth="2.500" />
        <path d="M694 314L705 328 699 333z" fill="#42a542" stroke="#2f7d2f" strokeWidth=".7" />
        <path d="M739 402L820 366" stroke="#c8322f" strokeWidth="2.500" />
        <path d="M832 360L816 370 812 364z" fill="#e04038" stroke="#b22a26" strokeWidth=".7" />
        <path d="M739.500 402L741 368" stroke="#0d2a8c" strokeWidth="2.500" />
        <ellipse cx="741" cy="378" rx="3.500" ry="4.500" fill="#0c2d80" />
        <ellipse cx="742" cy="368" rx="3.500" ry="3.500" fill="#0505a8" />
        <path d="M732 403h14M739 397v12" stroke="#0a0af0" strokeWidth="2" />
        <text x="673" y="286" fill="#1818e0">Y</text>
        <text x="697" y="309" fill="#3a9a35">YM</text>
        <text x="815" y="354" fill="#cc3630">XM</text>
        <text x="861" y="349" fill="#1818e0">X</text>
        <text x="723" y="372" fill="#2b62ee">ZM</text>
        <text x="738" y="366" fill="#1818e0">Z</text>

        {/* view triad */}
        <path d="M322 586L338 577 346 594 333 603z" fill="#cdcfcf" stroke="#999c9c" />
        <path d="M326 588L338 583 343 594 334 598zM338 577v6M346 594h-3" fill="none" stroke="#a9abab" />
        <path d="M329 605L319 587" stroke="#3c9a3c" strokeWidth="2" />
        <path d="M316 580L322 586 318 590z" fill="#2eaa2e" />
        <path d="M331 605L348 596" stroke="#c8322f" strokeWidth="2" />
        <path d="M356 592L349 599 346 594z" fill="#d43c34" />
        <path d="M330 606v-8" stroke="#0f2bb0" strokeWidth="2" />
        <path d="M330 595l3 6h-6z" fill="#0f2bb0" />
        <circle cx="329.500" cy="606" r="4" fill="#a7a9ab" stroke="#7d8082" strokeWidth=".6" />
        <circle cx="328" cy="605" r="1.500" fill="#e8e8e8" />
        <g fontSize="12">
            <text x="310" y="579" fill="#3a9a35">Y</text>
            <text x="357" y="596" fill="#cc3630">X</text>
            <text x="327" y="599" fill="#1e46e6">Z</text>
        </g>
    </svg>
);

const Watermark = () => (
    <div className="pointer-events-none absolute right-6 bottom-[2px] flex items-center gap-2 text-white/50">
        <svg width="73" height="84" viewBox="50 27 219 252" stroke="#e6e8ea" strokeWidth="3">
            <path d="M96 68L160 30 203 54Q220 80 219 119L160 85Q130 68 96 68z" fill="#cde5f3" />
            <path d="M203 54L267 90V152Q250 172 219 186V119Q220 80 203 54z" fill="#84ccef" />
            <path d="M267 152V215L225 237Q195 235 160 219L219 186Q250 172 267 152z" fill="#74bfe6" />
            <path d="M225 237L160 276 117 250Q101 220 101 186L160 219Q195 235 225 237z" fill="#76c8f0" />
            <path d="M117 250L52 215V160Q70 130 101 119V186Q101 220 117 250z" fill="#9bd3ef" />
            <path d="M52 160V90L96 68Q130 68 160 85L101 119Q70 130 52 160z" fill="#b2dcf2" />
            <path d="M160 85L219 119V186L160 219 101 186V119z" fill="#e8ebed" stroke="none" />
            <g stroke="none">
                <path d="M160 97L208 124 160 152 112 124z" fill="#b2dcf2" />
                <path d="M112 124L160 152V208L112 180z" fill="#9bd3ef" />
                <path d="M208 124L160 152V208L208 180z" fill="#74bfe6" />
            </g>
            <path d="M112 124L160 152 208 124M160 152v56" fill="none" strokeWidth="2" />
        </svg>
        <div className="flex flex-col">
            <p className="flex h-11 items-center font-bold">
                <span className="font-['Liberation_Sans',sans-serif] text-[48px] leading-none">3D</span>
                <span className="text-[39px] leading-none">世界网</span>
            </p>
            <p className="font-['DejaVu_Sans',sans-serif] text-[16px] leading-5 font-bold">WWW.3DSJW.COM</p>
        </div>
    </div>
);

function GraphicsWindow() {
    return (
        <main className="ml-[9px] flex min-w-0 flex-1 flex-col border-l border-[#8e8e8e]">
            <div className="flex h-[23px] shrink-0 border-b-2 border-[#55a0b9]">
                <div className="flex items-center bg-[#55a0b9] pr-[7px] pl-1 text-[12px] text-white">
                    <Svg w={20} h={18}>
                        <path d="M9 5h9l-3 4H9M9 10l6-1" fill="none" stroke="#5b6066" strokeWidth="1.2" />
                        <Star x={6} y={14} r={4} />
                        <Bit x={4} y={1} w={4} h={12} />
                    </Svg>
                    <span className="pr-[6px] pl-[2px]">_model3.prt</span>
                    <Svg w={11} h={12}>
                        <path d="M7 1H1v10h7V8M6 1l3 3v1M4 5h5l-2-2M9 5L7 7" fill="none" stroke="#fff" strokeWidth="1.500" />
                    </Svg>
                    <button aria-label="关闭" className="pl-[6px]">
                        <Svg w={10} h={10}>
                            <path d="M1 1l8 8M9 1L1 9" stroke="#fff" strokeWidth="2.200" />
                        </Svg>
                    </button>
                </div>
            </div>
            <div className="relative min-h-0 flex-1 overflow-hidden bg-linear-to-b from-[#b5b6b7] via-[#d0d1d2] via-45% to-[#e6e8ea] to-80%">
                <Scene />
                <Watermark />
            </div>
        </main>
    );
}

export default function App() {
    return (
        <div className="flex h-screen flex-col overflow-hidden bg-white font-['Open_Sans','Noto_Sans_CJK_SC',sans-serif] text-[11px] text-[#1a1a1a]">
            <div className="flex h-[3px] shrink-0 bg-[#dcdcdc]">
                <span className="w-[2px] bg-[#55a0b9]" />
                <span className="w-[53px] bg-white" />
            </div>
            <Ribbon />
            <SelectionBar />
            <div className="flex min-h-0 flex-1">
                <Navigator />
                <GraphicsWindow />
            </div>
            <footer className="flex h-[10px] shrink-0 items-start justify-between overflow-hidden border-t border-[#a5a5a5]">
                <span className="flex-1" />
                <strong className="pt-[2px] pr-20 leading-4">全部 1</strong>
                <span className="flex flex-1 justify-end">
                    <svg width="15" height="9" viewBox="0 0 15 9" className="mt-[2px]">
                        <path d="M0 4V1h4M11 1h4v3" fill="none" stroke="#999" strokeWidth="1.500" />
                        <path d="M3 9V4h9v5" fill="#fff" stroke="#555" strokeWidth="1.500" />
                        <path d="M5 7h5" stroke="#3d79c6" strokeWidth="2" />
                    </svg>
                </span>
            </footer>
        </div>
    );
}
